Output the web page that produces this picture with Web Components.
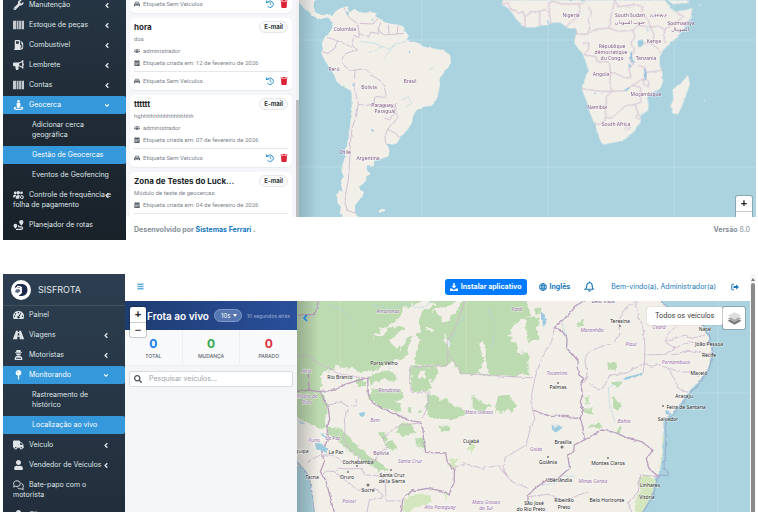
<!DOCTYPE html>
<html lang="pt-BR">
<head>
<meta charset="utf-8">
<title>SISFROTA</title>
<style>
html,body{margin:0;height:100%}
body{background:#fff;font-family:Inter,"Liberation Sans",sans-serif;font-size:7px;line-height:10px;color:#343a40;overflow:hidden}
</style>
</head>
<body>
<fleet-app></fleet-app>
<script>
const ICONS = {
  wrench:['0 0 512 512','<path d="M507.73 109.1c-2.24-9.03-13.54-12.09-20.12-5.51l-74.36 74.36-67.88-11.31-11.31-67.88 74.36-74.36c6.62-6.62 3.43-17.9-5.66-20.16-47.38-11.74-99.55.91-136.58 37.93-39.64 39.64-50.55 97.1-34.05 147.2L18.74 402.76c-24.99 24.99-24.99 65.51 0 90.5 24.99 24.99 65.51 24.99 90.5 0l213.21-213.21c50.12 16.71 107.47 5.68 147.37-34.22 37.07-37.07 49.7-89.32 37.91-136.73zM64 472c-13.25 0-24-10.75-24-24 0-13.26 10.75-24 24-24s24 10.74 24 24c0 13.25-10.75 24-24 24z"/>'],
  user:['0 0 448 512','<path d="M224 256c70.7 0 128-57.3 128-128S294.7 0 224 0 96 57.3 96 128s57.3 128 128 128zm89.6 32h-16.7c-22.2 10.2-46.9 16-72.9 16s-50.6-5.8-72.9-16h-16.7C60.2 288 0 348.2 0 422.4V464c0 26.5 21.5 48 48 48h352c26.5 0 48-21.5 48-48v-41.6c0-74.2-60.2-134.4-134.4-134.4z"/>'],
  trash:['0 0 448 512','<path d="M432 32H312l-9.4-18.7A24 24 0 0 0 281.1 0H166.8a23.72 23.72 0 0 0-21.4 13.3L136 32H16A16 16 0 0 0 0 48v32a16 16 0 0 0 16 16h416a16 16 0 0 0 16-16V48a16 16 0 0 0-16-16zM53.2 467a48 48 0 0 0 47.9 45h245.8a48 48 0 0 0 47.9-45L416 128H32z"/>'],
  truck:['0 0 640 512','<path d="M624 352h-16V243.9c0-12.7-5.1-24.9-14.1-33.9L494 110.1c-9-9-21.2-14.1-33.9-14.1H416V48c0-26.5-21.5-48-48-48H48C21.5 0 0 21.5 0 48v320c0 26.5 21.5 48 48 48h16c0 53 43 96 96 96s96-43 96-96h128c0 53 43 96 96 96s96-43 96-96h48c8.8 0 16-7.2 16-16v-32c0-8.8-7.2-16-16-16zM160 464c-26.5 0-48-21.5-48-48s21.5-48 48-48 48 21.5 48 48-21.5 48-48 48zm320 0c-26.5 0-48-21.5-48-48s21.5-48 48-48 48 21.5 48 48-21.5 48-48 48zm80-208H416V144h44.1l99.9 99.9V256z"/>'],
  search:['0 0 512 512','<path d="M505 442.7L405.3 343c-4.5-4.5-10.6-7-17-7H372c27.6-35.3 44-79.7 44-128C416 93.1 322.9 0 208 0S0 93.1 0 208s93.1 208 208 208c48.3 0 92.7-16.4 128-44v16.3c0 6.4 2.5 12.5 7 17l99.7 99.7c9.4 9.4 24.6 9.4 33.9 0l28.3-28.3c9.4-9.4 9.4-24.6.1-34zM208 336c-70.7 0-128-57.2-128-128 0-70.7 57.2-128 128-128 70.7 0 128 57.2 128 128 0 70.7-57.2 128-128 128z"/>'],
  barcode:['0 0 18 16','<path d="M0 1h5v14H0zM6 1h3v14H6zM10 1h3v14h-3zM14 1h4v14h-4z" opacity=".85"/>'],
  fuel:['0 0 16 16','<path fill-rule="evenodd" d="M2 1.500Q2 0 3.500 0H9q1.500 0 1.500 1.500V8q2 0 2 2v2.500q0 .8.700.8t.8-.8V7.500Q12.500 7 12.500 5.500V4L11 2.500 12 1.500l3 3Q15.500 5 15.500 6v6.500Q15.500 15 13.200 15T11 12.500V10h-.5v4h.5q.5 0 .5.500V16H1v-1.500q0-.5.500-.5H2zM4 2v4h4.500V2z"/>'],
  horn:['0 0 18 16','<path fill-rule="evenodd" d="M16 0q1 0 1 1v4.500q1 .5 1 1.500t-1 1.500V13q0 1-1 1-3-3.500-7-3.800Q8.300 12 9.500 13.500 9 16 7 16H5q-1.500-3-1-5.800H2Q0 10.200 0 8.200V6Q0 4 2 4h7q4-.5 7-4zm-1 3.200Q12.500 5.200 10 5.700v2.700q2.500.5 5 2.500z"/>'],
  street:['0 0 16 16','<circle cx="8" cy="2" r="2"/><path d="M6 4.500h4q1 0 1 1V9l-1 .5V12q0 1-1 1H7q-1 0-1-1V9.500L5 9V5.500q0-1 1-1zM4.500 10.500 5 12q-2 .3-3 1 2.500 1.200 6 1.200t6-1.200q-1-.7-3-1l.5-1.500Q16 11.300 16 13q-1 3-8 3t-8-3q0-1.700 4.500-2.500z"/>'],
  people:['0 0 20 16','<circle cx="4" cy="4" r="2.500"/><circle cx="15.500" cy="4" r="2.500"/><circle cx="9.500" cy="4" r="3.200"/><path d="M0 11q0-4 4-4 1.500 0 2 1Q4 9.500 4 12H0zM5 14q0-6 5-6 2 0 3 1-2.500 2-1.500 6H6q-1 0-1-1z"/><path fill-rule="evenodd" d="M16 7.500l.8 1.300 1.500-.2.400 1.600 1.300.8-.8 1.300.3 1.500-1.600.4-.9 1.300-1.300-.8-1.500.3-.4-1.600-1.300-.9.8-1.300-.2-1.500 1.600-.4zm0 2.700a1.500 1.500 0 1 0 .01 0z"/>'],
  group:['0 0 20 14','<circle cx="3.500" cy="3.500" r="2"/><circle cx="16.500" cy="3.500" r="2"/><circle cx="10" cy="3.500" r="3"/><path d="M0 9q0-3 3-3h2q-1.500 1.500-1.500 4H0zM20 9q0-3-3-3h-2q1.500 1.500 1.500 4H20zM4.500 11q0-4 4-4h3q4 0 4 4v2h-11z"/>'],
  route:['0 0 16 16','<path d="M12.500 0Q16 .3 16 3.200 16 5 12.500 9 9 5 9 3.200 9 .3 12.500 0zM3 6q3 .3 3 2.800Q6 11 3 14 0 11 0 8.800 0 6.300 3 6z"/><path d="M4 14.800h8q2.500 0 2.500-2t-2.500-2H9.500Q7.500 10.500 8 8.500" fill="none" stroke="currentColor" stroke-width="2"/>'],
  gauge:['0 0 18 16','<path fill-rule="evenodd" d="M9 1a9 9 0 0 1 7.800 13.500H1.200A9 9 0 0 1 9 1zm0 1.500a1.100 1.100 0 1 0 .01 0zM4 5a1.100 1.100 0 1 0 .01 0zM2.500 9a1.100 1.100 0 1 0 .01 0zM15.500 9a1.100 1.100 0 1 0 .01 0zM12.500 4.500 9 9.500a2 2 0 1 0 1.500.8L13.500 5z"/>'],
  road:['0 0 18 16','<path fill-rule="evenodd" d="M5 1h3v2h2V1h3l5 13q0 1-1 1h-6v-4H7v4H1q-1 0-1-1zM8 5l-.5 4h3L10 5z"/>'],
  driver:['0 0 16 16','<path d="M5 0h6l1 3h1.500v1.500h-11V3H4zM4 5.500h8Q12 9 8 9T4 5.500zM2 16q-1-6 4-6.500h4q5 .5 4 6.500zm2-3.500V14h8v-1.500z" fill-rule="evenodd"/>'],
  pin:['0 0 12 16','<path fill-rule="evenodd" d="M6 0a4.500 4.500 0 0 1 1 8.900V14l-1 2-1-2V8.900A4.500 4.500 0 0 1 6 0zm-.3 1.800Q3.800 2 3.300 4.200l.9.200Q4.500 2.800 6 2.600z"/>'],
  chat:['0 0 18 16','<path d="M6.500 1q5.500.3 5.500 4.800T6.500 10.500L4 10l-3 1.500L2 8.500Q0 6 1.500 3.500 3.500 1 6.500 1zM13.500 5.500Q17 6.500 17 10q0 1.500-1 2.500l1 3-3.500-1.200Q9.500 15 7.500 12.500" fill="none" stroke="currentColor" stroke-width="1.500"/>'],
  car:['0 0 16 14','<path fill-rule="evenodd" d="M4 1h8l2 4.500 2 1.500v6h-3v-2H3v2H0V7l2-1.500zm.8 1.800-1 2.700h8.400l-1-2.700zM3 7.500a1 1 0 1 0 .01 0zM13 7.500a1 1 0 1 0 .01 0z"/>'],
  calendar:['0 0 14 16','<path fill-rule="evenodd" d="M3 0h2v2h4V0h2v2h3v3H0V2h3zM0 6h14v10H0zm3 2v2h2V8zm3 0v2h2V8zm3 0v2h2V8zm-6 3v2h2v-2zm3 0v2h2v-2z"/>'],
  history:['0 0 16 16','<path d="M3.500 4A6.500 6.500 0 1 1 3 12.500" fill="none" stroke="currentColor" stroke-width="2"/><path d="M0 0l6 6H0z"/><path d="M8.500 4v4.500L11 10.500" fill="none" stroke="currentColor" stroke-width="1.800"/>'],
  download:['0 0 16 16','<path d="M6.500 0h3v5.500H13l-5 5.500-5-5.500h3.500zM0 11h4l4 3 4-3h4v5H0z"/>'],
  globe:['0 0 16 16','<g fill="none" stroke="currentColor" stroke-width="1.700"><circle cx="8" cy="8" r="7"/><ellipse cx="8" cy="8" rx="3.300" ry="7"/><path d="M1 5.500h14M1 10.500h14M8 1v14"/></g>'],
  bell:['0 0 16 18','<path d="M8 1v1.500Q12.500 3 12.500 8t2.500 5.500H1Q3.500 12 3.500 8T8 2.500M6 15.500q2 2 4 0" fill="none" stroke="currentColor" stroke-width="1.800"/>'],
  logout:['0 0 16 14','<path d="M6 1.500H3Q1.500 1.500 1.500 3v8q0 1.500 1.500 1.500h3" fill="none" stroke="currentColor" stroke-width="2"/><path d="M5 5h5V2l6 5-6 5V9H5z"/>'],
  bars:['0 0 12 14','<path d="M0 1h12v3H0zM0 5.500h12v3H0zM0 10h12v3H0z"/>'],
  left:['0 0 10 16','<path d="M8 3 3 8l5 5" fill="none" stroke="currentColor" stroke-width="3.200"/>'],
  down:['0 0 16 12','<path d="M3 3l5 5 5-5" fill="none" stroke="currentColor" stroke-width="3"/>'],
  layers:['0 0 26 26','<path d="M13 12 25 17 13 24 1 17z" fill="#777"/><path d="M13 8 25 13 13 20 1 13z" fill="#aaa"/><path d="M13 2 25 8 13 15 1 8z" fill="#ddd"/>'],
  logo:['0 0 40 40','<circle cx="20" cy="20" r="20" fill="#fff"/><path d="M13 8h10q10 2 10 12T23 32H15l7-6V17L11 14 7 17Q8 10 13 8z" fill="#1c2a50"/><path d="M10 19l6-1 3 4-5 4-6-2z" fill="#5b6a86"/><path d="M12 12q7-2 11 4l-2 1q-4-4-9-3z" fill="#fff"/>'],
};
function define(tag, css, html){
  customElements.define(tag, class extends HTMLElement{
    constructor(){
      super();
      const t = document.createElement('template');
      t.innerHTML = '<style>*{box-sizing:border-box}a{color:inherit;text-decoration:none}button,select,input{font:inherit;color:inherit;margin:0;padding:0;border:0;background:none;appearance:none}' + css + '</style>' + (typeof html === 'function' ? html(this) : html);
      this.attachShadow({mode:'open'}).append(t.content.cloneNode(true));
    }
  });
}

define('ui-icon', ':host{display:inline-block;width:8px;height:8px;flex:none}svg{display:block;width:100%;height:100%;fill:currentColor}', h => {
  const [box, body] = ICONS[h.getAttribute('name')];
  return `<svg viewBox="${box}" aria-hidden="true">${body}</svg>`;
});

define('side-item', `
:host{display:block;margin-bottom:2px;color:#dfe4e8}
a{display:block;position:relative;padding:4px 10px;line-height:10px}
.lead{width:11px;height:10px;margin-right:5px;vertical-align:top}
:host([sub]) a{padding-left:29px}
:host([active]) a{background:#3498db;border-radius:0 2px 2px 0;color:#fff}
.arrow{position:absolute;right:16px;top:6px;width:6px;height:7px}`,
h => `<a href="#">${h.hasAttribute('icon') ? `<ui-icon class="lead" name="${h.getAttribute('icon')}"></ui-icon>` : ''}<slot></slot>${h.hasAttribute('arrow') ? `<ui-icon class="arrow" name="${h.getAttribute('arrow')}"></ui-icon>` : ''}</a>`);

define('side-bar', `
:host{display:block;width:123px;flex:none;overflow:hidden;background:linear-gradient(#2c3e50,#222e3b)}
:host([scrolled]){background:linear-gradient(#263543,#192129)}
:host([scrolled]) nav{margin-top:-4px}`, `<slot name="brand"></slot><nav><slot></slot></nav>`);

define('brand-logo', `
:host{display:block;border-bottom:1px solid #43525f;color:#e3e8eb}
a{display:flex;align-items:center;gap:7px;height:31px;padding:0 8px;font-size:9px}
ui-icon{width:20px;height:20px}`, `<a href="#"><ui-icon name="logo"></ui-icon>SISFROTA</a>`);

define('zoom-control', `
:host{display:block;width:16px;background:#fff;border-radius:2px;box-shadow:0 0 0 1px #0003}
button{display:block;width:100%;height:15px;font:bold 11px/15px "Liberation Sans",sans-serif;color:#222;text-align:center}
button+button{border-top:1px solid #ccc;color:#555}`, `<button aria-label="Aumentar zoom">+</button><button aria-label="Diminuir zoom">−</button>`);

define('fence-card', `
:host{display:block;flex:none;background:#fff;border-radius:5px;padding:0 4px;box-shadow:0 1px 1px #0000000d}
.head{display:flex;align-items:center;justify-content:space-between;height:15px;padding-top:3px}
h3{margin:0;font-size:8px;line-height:12px;font-weight:700;color:#212529}
.tag{background:#f8f9fa;border:1px solid #e6e8eb;border-radius:6px;padding:0 4px;font-size:6px;line-height:10px;font-weight:700;color:#343a40}
.row,.foot{display:flex;align-items:center;gap:3px;height:12px;font-family:Roboto,sans-serif;font-size:6px;color:#7c848c}
.row ui-icon,.foot ui-icon{width:6px;height:6px;color:#59616a}
.foot{height:18px}
.body{border-bottom:1px solid #e5e7ea;padding-bottom:2px}
.gap{height:18px}
button{display:block}
.foot button ui-icon{display:block;width:8px;height:8px}
.hist{margin-left:auto;margin-right:3px}.foot .hist ui-icon{color:#2f97d4}.foot .del ui-icon{color:#dc2438}`,
h => {
  const g = n => h.getAttribute(n);
  return (g('name') ? `<div class="body"><div class="head"><h3>${g('name')}</h3><span class="tag">E-mail</span></div>
  <div class="row">${g('note')}</div>
  ${g('owner') ? `<div class="row"><ui-icon name="group"></ui-icon>${g('owner')}</div>` : ''}
  <div class="row"><ui-icon name="calendar"></ui-icon>Etiqueta criada em: ${g('date')}</div></div>` : '') +
  (h.hasAttribute('bare') ? '<div class="gap"></div>' : `<div class="foot"><ui-icon name="car"></ui-icon>Etiqueta Sem Veículos<button class="hist" aria-label="Histórico"><ui-icon name="history"></ui-icon></button><button class="del" aria-label="Excluir"><ui-icon name="trash"></ui-icon></button></div>`);
});

const MAPCSS = `:host{display:block;overflow:hidden;background:#aad3df}svg{display:block;width:100%;height:100%}
text{font-family:"Noto Sans","DejaVu Sans",sans-serif;font-size:5px;text-anchor:middle;paint-order:stroke;stroke:#fff9;stroke-width:1px}
.c{fill:#79547f}.r{fill:#9a70aa;font-style:italic}.t{fill:#222}
.land{fill:#f2efe9}.b{fill:none;stroke:#cdb6cf;stroke-width:2.500}.bb{fill:none;stroke:#b9a0be;stroke-width:4}.w{fill:none;stroke:#aad3df;stroke-width:2}.lake{fill:#9ccbe0}.g{fill:#bddbb0}`;
const labels = (cls, list) => list.map(([x,y,s]) => `<text class="${cls}" x="${x}" y="${y}">${s}</text>`).join('');

define('world-map', MAPCSS, `<svg viewBox="299 0 457 217" preserveAspectRatio="xMinYMin slice">
<defs><filter id="rough" x="-5%" y="-5%" width="110%" height="110%"><feTurbulence type="fractalNoise" baseFrequency=".15" numOctaves="2" seed="4"/><feDisplacementMap in="SourceGraphic" scale="2.500" xChannelSelector="R" yChannelSelector="G"/></filter>
<linearGradient id="edge"><stop stop-color="#456" stop-opacity=".25"/><stop offset="1" stop-color="#456" stop-opacity="0"/></linearGradient></defs>
<g filter="url(#rough)"><g transform="translate(295 0) scale(.33333)">
<path class="land" d="M12 0H58L56 22 66 40 84 46 98 42 110 50 118 38 130 28 148 22 160 18 158 30 170 34 178 26 192 36 210 38 228 36 246 40 240 48 254 56 268 66 290 72 312 74 326 80 332 96 342 108 334 120 350 124 372 130 392 142 420 146 444 150 466 166 468 186 460 202 446 220 434 234 434 262 428 290 418 310 408 318 386 320 366 330 354 346 352 366 340 386 328 400 314 416 306 430 292 434 272 430 280 440 284 454 276 470 256 478 238 482 236 498 214 500 218 514 226 520 214 526 214 540 204 552 192 560 196 570 208 576 200 590 190 604 180 616 180 634 188 655H145L134 640 138 620 128 610 126 590 132 570 142 575 138 540 146 530 138 510 144 490 150 470 150 450 160 430 162 400 166 370 170 330 170 280 160 268 140 258 124 244 118 226 104 204 90 182 78 160 84 146 80 130 90 112 102 98 112 84 112 66 106 58 96 52 80 58 64 52 50 44 40 34 28 24 12 8zM250 632 262 626 274 630 264 636 254 638z"/>
<path class="b" d="M148 24 160 50 188 72 192 92 194 112 176 106 172 135 184 150 150 162 140 180 150 200 168 212 180 210 210 206 236 230 254 240 272 262 272 292 240 290 236 312 254 320 272 316M96 112 128 122 172 142M128 122 118 146 98 160 82 156M194 70 230 72 250 56M190 100 220 112 228 96 250 102 250 86 258 66M250 86 262 106 282 104 280 74M282 104 306 102 310 76M306 102 326 100M180 212 178 250 184 290 190 310 218 316 240 312M190 310 184 350 172 380 166 430 164 480 160 540 152 580 150 610 158 632 184 640M272 316 300 322 298 342 284 360 268 354M300 338 310 352 290 372 278 388 270 410 272 430M278 388 302 400 314 414"/>
<path class="w" d="M196 124 240 130 262 140 282 148 300 132 334 124M262 140 220 158M300 134 268 176M320 300 340 290 350 310 334 320M402 206 416 202" opacity=".8"/>
<path class="lake" d="M154 34 162 38 160 46 154 44zM172 250 180 258 178 262 172 256zM228 388 240 390 238 394 230 394zM340 152 346 154 344 162zM230 56 236 58 232 62z"/>
</g><g transform="translate(525 0) scale(.33333)">
<path class="land" d="M-66 0-70 12-50 26-38 40-26 58 0 82 30 82 50 76 72 76 84 68 106 68 122 80 134 86 150 84 156 96 150 112 148 130 160 146 172 160 178 174 186 196 188 218 178 240 170 266 180 292 190 318 196 342 206 366 216 392 222 412 228 428 238 434 262 428 290 424 314 408 334 386 346 368 348 346 370 330 370 308 366 292 386 276 408 262 414 244 412 216 404 196 404 172 412 154 430 134 456 112 478 84 496 54 502 24 480 30 450 34 436 28 432 16 420 0zM430 0 442 12 490 10 486 0zM488 224 495 250 484 284 470 320 460 342 442 340 436 318 446 296 442 270 456 258 472 248zM520 13 530 15 524 18zM536 302 542 300 540 306zM554 294 558 294 556 298z"/>
<path class="b" d="M-68 12-48 8-46 26-20 40-6 34 0 50 18 36 44 34 60 28 74 40 78 74M0 82V50M44 78V36M74 36 70 10 84 4 110 12 170 12 182 0M122 80 150 56 168 30 160 14M150 84 156 102 190 102 210 88 252 84 256 56 270 0 280 20 330 14 354 20 350 36M188 104 194 84 190 60 200 42 190 20M252 84 280 94 324 90 340 76 376 82 400 78 418 88 478 50 450 36M324 90 330 110 318 130 328 156 316 166 322 196 312 204 318 232 304 234 274 222 256 218M176 164 214 170 216 184 254 186 256 218 254 256 262 274 230 274 170 266M172 130 192 130 190 150 176 162M262 274 244 290 240 362 222 374 208 368M262 274 300 272 322 256 346 262 348 306 330 314M244 354 268 348 300 318 330 314 340 342M340 345a6 6 0 1 0 .1 0zM300 384 310 376 318 384 308 390zM340 196 362 204 362 236 372 246 370 262 356 250 354 236 322 256M362 218 412 210M340 130 380 130 406 158M376 82 388 106 380 130M418 88V130M352 40 370 60 376 82"/>
<path class="lake" d="M338 122 356 118 354 138 340 142zM66 60 70 60 74 76 70 76zM206 278 214 280 208 283zM366 84 370 88 368 98z"/>
<path d="M318 156 320 178 328 192M358 204 362 222 360 240M312 192 316 202M300 272 312 264" fill="none" stroke="#7fb6dc" stroke-width="4"/>
</g></g>
<path d="M422 0V217M548 0V217M674 0V217M299 40H756M299 167H756" stroke="#fff" stroke-opacity=".18" fill="none"/>
<rect x="299" width="18" height="217" fill="url(#edge)"/>
${labels('c',[[345,31,'Colombia'],[334,71,'Perú'],[369,89,'Bolivia'],[410,83,'Brasil'],[384,107,'Paraguay /'],[385,113,'Paraguái'],[345,154,'Chile'],[368,160,'Argentina'],[571,17,'Nigeria'],[630,17,'South Sudan'],[630,24,'جنوب السودان'],[658,17,'ኢትዮጵያ'],[681,25,'Soomaaliya'],[680,31,'الصومال'],[654,43,'Kenya'],[612,48,'République'],[611,54,'démocratique'],[612,60,'du Congo'],[646,60,'Tanzania'],[601,76,'Angola'],[646,96,'Moçambique'],[597,109,'Namibia'],[616,126,'South Africa']])}
</svg>`);

define('fleet-map', MAPCSS, `<svg viewBox="297 301 453 211" preserveAspectRatio="xMinYMin slice">
<defs><filter id="rough" x="-5%" y="-5%" width="110%" height="110%"><feTurbulence type="fractalNoise" baseFrequency=".16" numOctaves="3" seed="9"/><feDisplacementMap in="SourceGraphic" scale="8" xChannelSelector="R" yChannelSelector="G"/></filter>
<filter id="fine" x="-5%" y="-5%" width="110%" height="110%"><feTurbulence type="fractalNoise" baseFrequency=".2" numOctaves="2" seed="2"/><feDisplacementMap in="SourceGraphic" scale="3" xChannelSelector="R" yChannelSelector="G"/></filter>
<linearGradient id="edge"><stop stop-color="#333" stop-opacity=".28"/><stop offset="1" stop-color="#333" stop-opacity="0"/></linearGradient></defs>
<rect x="297" y="301" width="453" height="211" class="land"/>
<g filter="url(#rough)"><g transform="translate(295 295) scale(.33333)">
<path class="g" d="M-10 0H520L455 34 430 40 400 60 350 130 330 190 290 200 240 225 200 230 170 222 120 215 80 240 78 285 95 320 100 350 92 375 95 400 60 395 30 380-10 355zM510 0H700L705 60 660 90 640 120 690 150 700 190 700 236 650 245 500 236 470 200 455 215 365 212 362 180 372 150 365 100 380 70 420 50 450 80 480 60zM345 215H425L430 235 405 260 412 285 380 292 350 285zM222 280 270 285 320 290 330 306 300 320 290 345 250 335 222 310zM230 240 270 225 306 240 300 262 270 250 240 262 225 275 220 250zM180 256 214 254 216 274 182 272zM340 340 352 340 350 352 338 350zM300 320 320 325 325 345 305 350 290 340zM370 340 384 342 382 354 370 352zM95 395 125 402 150 412 180 445 220 480 275 520 280 532 240 520 190 490 160 465 130 440 100 415zM400 292 430 306 460 320 500 345 520 352 480 372 440 378 400 360 390 340zM600 306 640 302 664 330 655 352 620 345 600 360 606 330zM530 300 560 320 590 330 560 352 530 340zM430 392 466 392 464 412 432 410zM320 385 350 386 364 410 340 422 300 415 305 400zM255 415 270 410 276 435 260 438zM270 440 290 436 310 460 290 466zM360 430 390 432 392 460 370 456zM690 70 720 60 740 80 725 100 730 130 705 140 695 110zM716 45 740 40 736 56 720 58zM840 82 864 78 868 96 848 98zM940 205 966 200 962 226 942 222zM866 305 880 300 885 320 870 326zM952 260 976 262 970 285 956 280zM955 300 975 330 970 350 955 335zM860 345 900 340 890 355 865 356zM880 395 910 382 920 392 890 402zM970 390 980 400 975 420 965 410z"/>
<path fill="#d3e6bd" d="M340 596 405 600 410 618 370 640 320 655 325 620zM470 490 486 495 482 514 462 510zM520 440 540 450 530 480 516 460zM1044 540 1085 545 1078 600 1050 651H1010L1022 610 1040 585 1030 560zM440 590 455 600 450 620zM1112 395 1104 480 1095 530 1102 440z"/>
<path class="land" d="M320 40 400 18 425 32 380 44 374 115 345 125 310 165 284 140 328 100 300 90 260 118 234 128 236 118 290 86 318 66zM552 140 572 150 572 196 582 236 556 232 562 190zM650 130 690 140 700 175 670 170zM395 95 412 100 408 112 396 108zM455 120 470 150 460 165 448 140zM370 230 392 230 388 248 372 244z"/>
</g></g>
<g filter="url(#fine)"><g transform="translate(295 295) scale(.33333)">
<path fill="#aad3df" d="M1085 10 1120 40 1190 60 1220 90 1240 120 1250 170 1240 220 1210 260 1180 290 1160 320 1130 355 1105 375 1106 430 1102 490 1094 530 1080 550 1072 600 1036 660H1375V10zM-5 500 20 520 40 545 48 590 56 660H-5z"/>
<path d="M1085 10 1120 38 1190 58 1222 90 1243 120 1253 170 1243 222 1213 264 1184 294 1163 325 1133 359 1112 380 1113 430 1110 490 1106 520 1120 530 1118 542 1095 540 1084 555 1076 600 1042 655M0 495 22 518 42 543 50 590 58 655" fill="none" stroke="#9db4cf" stroke-width="4"/>
<path class="bb" d="M75 290 120 285 150 268 218 248 220 300 235 325 262 340 300 355 340 376 378 382 384 405 386 440 392 472 452 474 456 500 478 524 478 560 462 600 450 590 400 580 350 588 324 612 318 651M75 290 100 340 104 372 96 400 100 430 80 470 88 500 76 530 92 556 104 600 118 651M7 290 40 285 75 290M40 230 42 288M7 60 60 58 70 18"/>
<path class="b" d="M7 180 40 184 80 210 130 236 218 250M7 72 58 64M345 215 455 213 458 160 456 140 480 100 510 18M455 170 478 200 500 236 600 242 705 248 716 248M345 215 344 260 350 292 400 294 400 330 382 372M150 400 146 430 160 460 190 480 190 500 240 496 250 470 278 460 264 430 290 404 320 390 378 384M100 330 140 322 160 335 186 332 182 310M160 340 148 370 150 400M478 518 510 506 560 520 610 512 624 530 650 560 700 580M700 446 660 470 630 490 626 530 640 545M118 530 130 520 160 522 200 520 210 540 250 542 270 552 274 618 318 618M76 540 100 528 118 530 190 586 240 580 262 598 260 610 224 612 216 651M36 500 76 480 110 480 150 500 190 500"/>
<path class="bb" stroke-width="3" d="M870 18 845 30 820 60 800 78 778 98 800 106 816 130 815 160 835 180 850 200 846 216 852 240 866 250 858 270 862 300 856 320 864 345 856 370 864 400 868 435 920 405 960 412 1000 430 1040 440 1074 466 1054 490 1062 520 1090 545M715 345 740 356 770 365 800 360 840 370 856 368M868 435 838 450 836 470 818 480 824 520 806 535 790 550 760 552 720 580 700 600 698 622"/>
<path class="b" d="M778 98 770 140 740 190 722 240 710 300 712 345M712 345 720 370 706 400 694 446M1018 18 990 40 972 80 974 120 950 146 910 158 880 172 870 190 876 240 866 264M880 262 910 286 930 270 944 240 990 236 1020 220 1048 206M1022 18 1028 60 1044 100 1050 150 1048 206 1070 214 1090 208 1120 220 1160 232 1200 230 1210 246M1056 180 1110 178 1140 160 1110 140 1120 115 1140 98M1110 140 1170 120 1190 130 1230 120M1140 160 1180 140 1245 148M1130 180 1180 166 1248 178M1120 222 1138 252 1150 280 1176 292M1048 206 1044 236M1010 651 1000 620 1030 590 1034 540 1090 545M698 605 760 598 810 620 850 600 880 590"/>
<path class="w" d="M7 30 60 36 80 22M230 28 290 42 330 26 380 40 410 20M100 26 150 50 180 90M510 60 460 150M580 40 600 100 592 160M800 80 815 130M978 256 940 280 944 330 960 380M984 256 1010 244 1044 240M770 395 800 390 790 410M800 540 840 545M740 570 780 565" opacity=".8"/>
<path class="lake" d="M738 50 750 60 754 80 746 96 738 70zM985 248 1020 240 1042 232 1040 240 1010 248 990 256zM60 444 80 446 98 462 92 476 76 466 64 460zM76 412 92 424 96 432 82 426zM10 384 20 380 32 388zM280 214 288 218 284 222zM192 354 210 350 208 362 196 366zM770 388 782 400 790 392 800 398 786 412 772 408zM1112 346 1122 352 1128 360 1116 358z"/>
</g></g>
<path d="M340 301V512M466 301V512M592 301V512M718 301V512M297 393H750" stroke="#fff" stroke-opacity=".2" fill="none"/>
<rect x="297" y="301" width="22" height="211" fill="url(#edge)"/>
<path d="M307 315 304 318 307 321" fill="none" stroke="#1684e0" stroke-width="1.600"/>
<g fill="#777"><circle cx="368" cy="485" r="1.500"/><circle cx="562" cy="447" r="1.500"/><circle cx="357" cy="466" r="1"/><circle cx="391" cy="470" r="1"/><circle cx="348" cy="472" r="1"/><circle cx="558" cy="383" r="1"/><circle cx="620" cy="326" r="1"/><circle cx="663" cy="406" r="1"/><circle cx="608" cy="458" r="1"/><circle cx="548" cy="457" r="1"/><circle cx="470" cy="444" r="1"/></g>
${labels('r',[[388,313,'Amazonas'],[517,311,'Pará'],[307,373,'Acre'],[307,398,'Madre de'],[307,404,'Dios'],[389,392,'Rondônia'],[375,422,'Beni'],[333,440,'La Paz'],[314,442,'Puno'],[410,463,'Santa Cruz'],[479,414,'Mato Grosso'],[349,503,'Potosí'],[440,509,'Alto Paraguay'],[486,504,'Mato Grosso'],[486,510,'do Sul'],[592,332,'Maranhão'],[631,346,'Piauí'],[659,329,'Ceará'],[676,364,'Pernambuco'],[557,375,'Tocantins'],[624,423,'Bahia'],[536,451,'Goiás'],[593,483,'Minas Gerais']])}
${labels('c',[[381,455,'Bolivia'],[603,303,'Belo Vista']])}
${labels('t',[[384,365,'Porto Velho'],[340,379,'Rio Branco'],[471,443,'Cuiabá'],[336,454,'La Paz'],[302,453,'quipa'],[358,464,'Cochabamba'],[312,479,'Tacna'],[347,479,'Oruro'],[392,477,'Santa Cruz'],[392,483,'de la Sierra'],[368,492,'Sucre'],[620,323,'Teresina'],[705,331,'Natal'],[709,346,'João Pessoa'],[709,357,'Recife'],[699,375,'Maceió'],[558,389,'Palmas'],[684,398,'Aracaju'],[686,409,'Feira de Santana'],[668,421,'Salvador'],[563,444,'Brasília'],[548,464,'Goiânia'],[608,465,'Montes Claros'],[559,482,'Uberlândia'],[650,487,'Linhares'],[647,499,'Vitória'],[607,502,'Belo Horizonte'],[564,502,'Ribeirão'],[564,509,'Preto'],[534,505,'São José'],[531,511,'do Rio Preto']])}
</svg>`);

define('fence-page', `
:host{display:flex;min-height:0}
main{flex:1;min-width:0;display:flex;flex-direction:column}
.work{flex:1;min-height:0;display:flex}
.list{width:170px;flex:none;background:#f4f6f9;padding:0 4px;display:flex;flex-direction:column;gap:5px;overflow:hidden}
fence-card:first-child{margin-top:-5px}
.bar{width:3px;flex:none;background:#f1f1f1;display:flex;flex-direction:column;justify-content:flex-end}
.bar i{height:54%;background:#bdbdbd}
.map{flex:1;min-width:0;position:relative;overflow:hidden}
world-map{height:100%}
zoom-control{position:absolute;right:4px;bottom:-9px}
footer{flex:none;height:23px;padding:3px 6px 0 8px;display:flex;align-items:center;justify-content:space-between;color:#869099;background:#fff}
footer b{font-weight:700}footer a{color:#1478be}`, `
<side-bar scrolled>
<side-item icon="wrench" arrow="left">Manutenção</side-item>
<side-item icon="barcode" arrow="left">Estoque de peças</side-item>
<side-item icon="fuel" arrow="left">Combustível</side-item>
<side-item icon="horn" arrow="left">Lembrete</side-item>
<side-item icon="barcode" arrow="left">Contas</side-item>
<side-item icon="street" arrow="down" active>Geocerca</side-item>
<side-item sub>Adicionar cerca geográfica</side-item>
<side-item sub active>Gestão de Geocercas</side-item>
<side-item sub>Eventos de Geofencing</side-item>
<side-item icon="people" arrow="left">Controle de frequência e folha de pagamento</side-item>
<side-item icon="route">Planejador de rotas</side-item>
<side-item icon="user"></side-item>
</side-bar>
<main>
<div class="work">
<div class="list">
<fence-card></fence-card>
<fence-card name="hora" note="dos" owner="administrador" date="12 de fevereiro de 2026"></fence-card>
<fence-card name="tttttt" note="hghhhhhhhhhhhhhhhh" owner="administrador" date="07 de fevereiro de 2026"></fence-card>
<fence-card bare name="Zona de Testes do Luck..." note="Módulo de teste de geocercas" date="04 de fevereiro de 2026"></fence-card>
</div>
<div class="bar"><i></i></div>
<div class="map"><world-map></world-map><zoom-control></zoom-control></div>
</div>
<footer><b>Desenvolvido por <a href="#">Sistemas Ferrari</a> .</b><span><b>Versão</b> 8.0</span></footer>
</main>`);

define('stat-box', `
:host{display:block;flex:1;text-align:center;padding:7px 0 4px}
:host(:not(:last-child)){border-right:1px solid #eceef1}
b{display:block;font-size:12px;line-height:14px;color:var(--tone)}
span{display:block;font-size:5px;line-height:10px;font-weight:500;color:#5d666e}`, `<b><slot name="n"></slot></b><span><slot></slot></span>`);

define('live-panel', `
:host{display:block;width:172px;flex:none;position:relative;background:#f4f5f7}
header{height:29px;padding:0 6px 0 22px;display:flex;align-items:center;color:#fff;background:linear-gradient(90deg,#1e3c72,#2a4f9b);gap:5px;white-space:nowrap}
h2{margin:0;font-size:10px;line-height:12px;font-weight:600}
.pill{position:relative;display:block;flex:none}
select{display:block;width:28px;height:13px;border-radius:7px;border:1px solid #7f9ccd;background:#5675b1;padding:0 6px;font-size:6px;color:#fff}
.pill::after{content:"";position:absolute;right:5px;top:5px;border:2px solid transparent;border-top:3px solid #fff}
small{font-size:5px;color:#9db0d6}
.stats{display:flex;background:#f8f9fa;border-bottom:1px solid #eceef1}
label{display:flex;align-items:center;gap:7px;height:16px;margin:5px 4px;padding:0 4px;background:#fff;border:1px solid #d8dce1;border-radius:2px;color:#495057}
input{flex:1;min-width:0;color:#495057}input::placeholder{color:#9aa1a8}
zoom-control{position:absolute;left:5px;top:6px}`, `
<header><h2>Frota ao vivo</h2><span class="pill"><select aria-label="Intervalo"><option>10s</option></select></span><small>10 segundos atrás</small></header>
<div class="stats">
<stat-box style="--tone:#1480f0"><span slot="n">0</span>TOTAL</stat-box>
<stat-box style="--tone:#37a852"><span slot="n">0</span>MUDANÇA</stat-box>
<stat-box style="--tone:#dc2e40"><span slot="n">0</span>PARADO</stat-box>
</div>
<label><ui-icon name="search"></ui-icon><input type="search" placeholder="Pesquisar veículos..." aria-label="Pesquisar veículos"></label>
<zoom-control></zoom-control>`);

define('top-nav', `
:host{display:flex;align-items:center;height:27px;flex:none;padding:0 11px 2px 12px;background:#fff;color:#1878b8;white-space:nowrap;box-shadow:0 1px 1px #0001}
a,button{display:flex;align-items:center;gap:3px}
.menu{margin-right:auto;color:#62aedb}.menu ui-icon{width:7px;height:7px}
.install{height:16px;padding:0 5px;border-radius:3px;background:#007bff;color:#fff;font-weight:700;margin-right:12px}
.lang{font-weight:700;margin-right:14px}
.bell{margin-right:16px}.bell ui-icon{width:11px;height:11px}
.hi{margin-right:15px}`, `
<button class="menu" aria-label="Menu"><ui-icon name="bars"></ui-icon></button>
<button class="install"><ui-icon name="download"></ui-icon>Instalar aplicativo</button>
<a class="lang" href="#"><ui-icon name="globe"></ui-icon>Inglês</a>
<a class="bell" href="#" aria-label="Notificações"><ui-icon name="bell"></ui-icon></a>
<a class="hi" href="#">Bem-vindo(a), Administrador(a)</a>
<a href="#" aria-label="Sair"><ui-icon name="logout"></ui-icon></a>`);

define('live-page', `
:host{display:flex;min-height:0}
side-bar{width:122px}
main{flex:1;min-width:0;display:flex;flex-direction:column}
.work{flex:1;min-height:0;display:flex}
.map{flex:1;min-width:0;position:relative;overflow:hidden}
fleet-map{height:100%}
.tools{position:absolute;top:6px;right:5px;display:flex;align-items:flex-start}
select{display:block;width:76px;height:18px;padding:0 8px;background:#fff;border-radius:2px;box-shadow:0 0 1px #0006;color:#333}
.tools button{display:grid;place-items:center;width:22px;height:22px;background:#fff;border-radius:2px;box-shadow:0 0 0 1px #0003}
.tools ui-icon{width:15px;height:15px}
.bar{width:6px;flex:none;background:#f6f6f6;padding:4px 1px 0;display:flex;flex-direction:column;gap:2px}
.bar::before{content:"";border:2px solid transparent;border-top:0;border-bottom:3px solid #777}
.bar i{flex:1;background:#8a8a8a;border-radius:2px 2px 0 0}`, `
<side-bar>
<brand-logo slot="brand"></brand-logo>
<side-item icon="gauge">Painel</side-item>
<side-item icon="road" arrow="left">Viagens</side-item>
<side-item icon="driver" arrow="left">Motoristas</side-item>
<side-item icon="pin" arrow="down" active>Monitorando</side-item>
<side-item sub>Rastreamento de histórico</side-item>
<side-item sub active>Localização ao vivo</side-item>
<side-item icon="truck" arrow="left">Veículo</side-item>
<side-item icon="user" arrow="left">Vendedor de Veículos</side-item>
<side-item icon="chat">Bate-papo com o motorista</side-item>
<side-item icon="user" arrow="left">Cliente</side-item>
</side-bar>
<main>
<top-nav></top-nav>
<div class="work">
<live-panel></live-panel>
<div class="map"><fleet-map></fleet-map>
<div class="tools"><select aria-label="Filtro de veículos"><option>Todos os veículos</option></select><button aria-label="Camadas"><ui-icon name="layers"></ui-icon></button></div></div>
</div>
</main>
<div class="bar"><i></i></div>`);

define('fleet-app', `
:host{display:grid;height:100vh;padding:0 2px 0 3px;box-sizing:border-box;grid-template-rows:minmax(0,240fr) minmax(0,238fr);row-gap:34px;overflow:hidden}`, `<fence-page></fence-page><live-page></live-page>`);
</script>
</body>
</html>
